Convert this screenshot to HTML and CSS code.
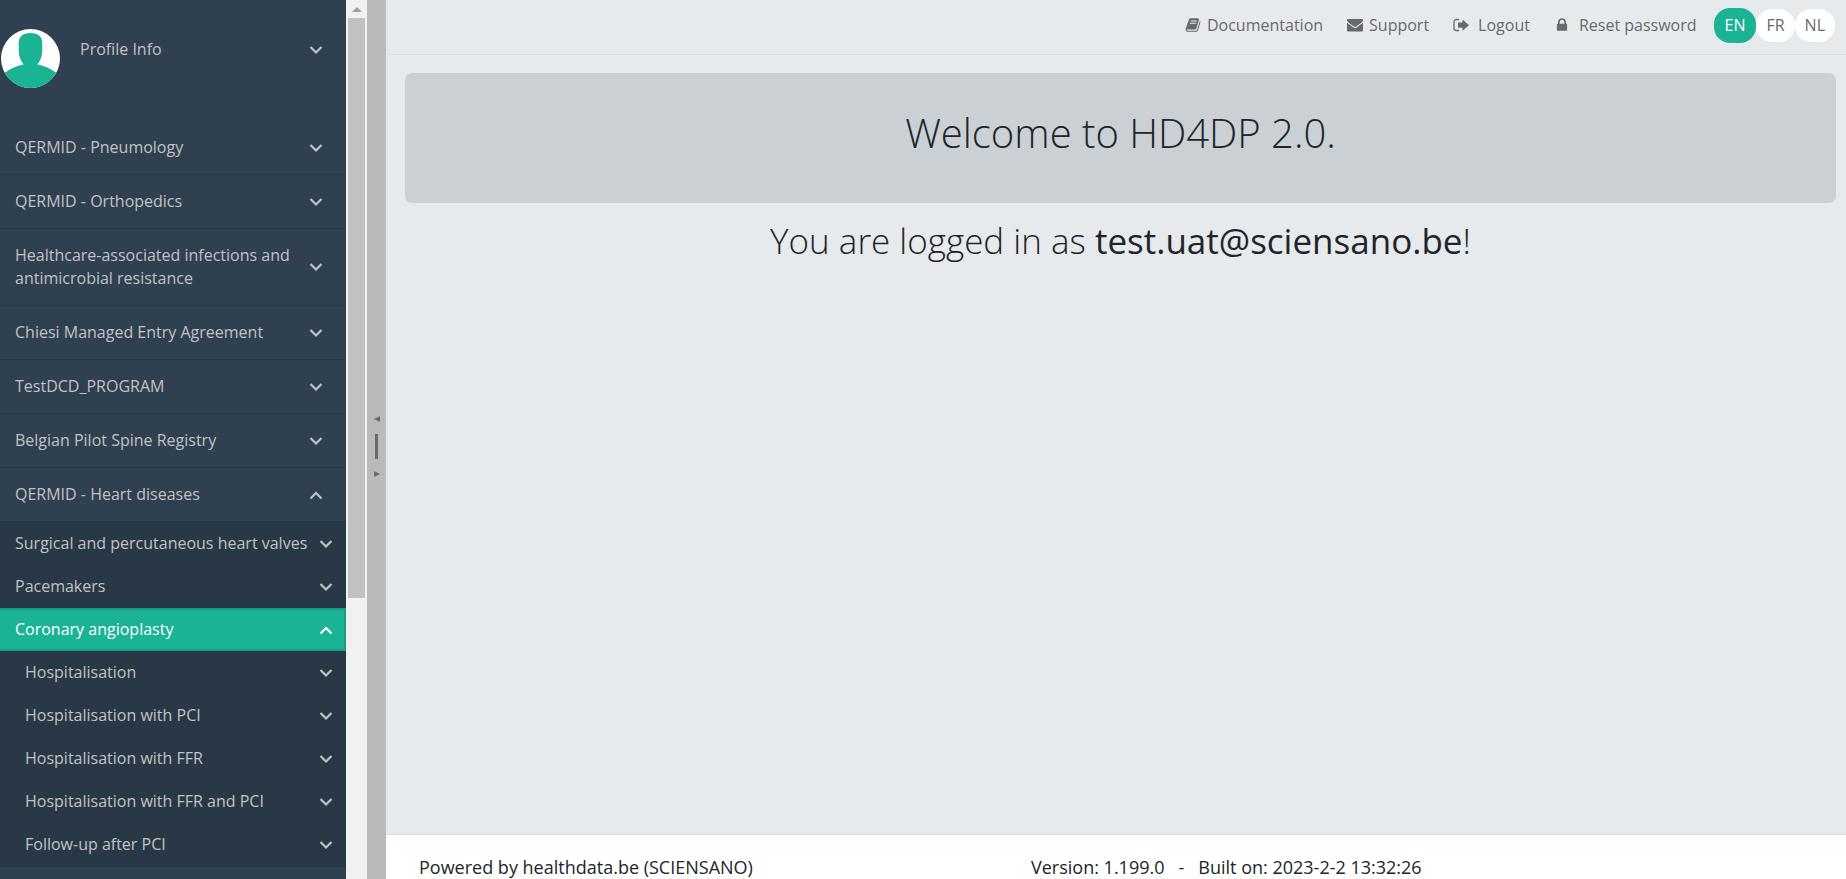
FILE: index.html
```html
<!DOCTYPE html>
<html lang="en">
<head>
  <meta charset="UTF-8" />
  <title>HD4DP 2.0</title>
  <meta name="viewport" content="width=device-width, initial-scale=1.0" />
  <link rel="stylesheet" href="styles.css">
</head>
<body>
  <!-- shared icons -->
  <svg class="sprite" aria-hidden="true">
    <symbol id="down" viewBox="0 0 16 16"><path d="M2.500 5l5.500 5.500L13.500 5" fill="none" stroke="currentColor" stroke-width="2.200" /></symbol>
    <symbol id="up" viewBox="0 0 16 16"><path d="M2.500 11.500L8 6l5.500 5.500" fill="none" stroke="currentColor" stroke-width="2.200" /></symbol>
  </svg>

  <div class="layout">
    <nav class="sidebar">
      <div class="profile">
        <svg class="avatar" viewBox="0 0 60 60">
          <clipPath id="round"><circle cx="30" cy="30" r="30" /></clipPath>
          <g clip-path="url(#round)">
            <rect width="60" height="60" fill="#fff" />
            <path d="M30 4c8 0 12 4 12 10v8c0 6-2 10-5 14q9 1 20 9h5v16H-2V45h5q11-8 20-9c-3-4-5-8-5-14v-8C18 8 22 4 30 4z" fill="#1ab394" />
          </g>
        </svg>
        <button class="profile-btn">Profile Info <svg class="chev"><use href="#down" /></svg></button>
      </div>

      <ul class="menu">
        <li><button>QERMID - Pneumology <svg class="chev"><use href="#down" /></svg></button></li>
        <li><button>QERMID - Orthopedics <svg class="chev"><use href="#down" /></svg></button></li>
        <li><button>Healthcare-associated infections and antimicrobial resistance <svg class="chev"><use href="#down" /></svg></button></li>
        <li><button>Chiesi Managed Entry Agreement <svg class="chev"><use href="#down" /></svg></button></li>
        <li><button>TestDCD_PROGRAM <svg class="chev"><use href="#down" /></svg></button></li>
        <li><button>Belgian Pilot Spine Registry <svg class="chev"><use href="#down" /></svg></button></li>
        <li>
          <button>QERMID - Heart diseases <svg class="chev"><use href="#up" /></svg></button>
          <ul class="submenu">
            <li><button>Surgical and percutaneous heart valves <svg class="chev"><use href="#down" /></svg></button></li>
            <li><button>Pacemakers <svg class="chev"><use href="#down" /></svg></button></li>
            <li>
              <button class="active">Coronary angioplasty <svg class="chev"><use href="#up" /></svg></button>
              <ul class="forms">
                <li><button>Hospitalisation <svg class="chev"><use href="#down" /></svg></button></li>
                <li><button>Hospitalisation with PCI <svg class="chev"><use href="#down" /></svg></button></li>
                <li><button>Hospitalisation with FFR <svg class="chev"><use href="#down" /></svg></button></li>
                <li><button>Hospitalisation with FFR and PCI <svg class="chev"><use href="#down" /></svg></button></li>
                <li><button>Follow-up after PCI <svg class="chev"><use href="#down" /></svg></button></li>
              </ul>
            </li>
          </ul>
        </li>
      </ul>
    </nav>

    <div class="scrollbar">
      <svg class="scroll-arrow" viewBox="0 0 10 6"><path d="M0 6l5-5 5 5z" fill="#a0a0a0" /></svg>
      <div class="scroll-thumb"></div>
    </div>

    <!-- drag handle between sidebar and content -->
    <div class="splitter">
      <svg viewBox="0 0 6 8"><path d="M6 1v6L0 4z" fill="#676a6c" /></svg>
      <span class="grip"></span>
      <svg viewBox="0 0 6 8"><path d="M0 1v6l6-3z" fill="#676a6c" /></svg>
    </div>

    <div class="page">
      <header class="topbar">
        <a href="#"><svg class="icon" viewBox="0 0 1792 1792"><path d="M1703 478q40 57 18 129l-275 906q-19 64-76.500 107.500t-122.500 43.500h-923q-77 0-148.500-53.500t-99.500-131.500q-24-67-2-127 0-4 3-27t4-37q1-8-3-21.500t-3-19.500q2-11 8-21t16.500-23.500 16.500-23.500q23-38 45-91.500t30-91.500q3-10 .5-30t-.5-28q3-11 17-28t17-23q21-36 42-92t25-90q1-9-2.500-32t.5-28q4-13 22-30.500t22-22.500q19-26 42.500-84.500t27.500-96.500q1-8-3-25.500t-2-26.500q2-8 9-18t18-23 17-21q8-12 16.500-30.500t15-35 16-36 19.500-32 26.500-23.500 36-11.500 47.500 5.500l-1 3q38-9 51-9h761q74 0 114 56t18 130l-274 906q-36 119-71.500 153.500t-128.500 34.500h-869q-27 0-38 15-11 16-1 43 24 70 144 70h923q29 0 56-15.500t35-41.500l300-987q7-22 5-57 38 15 59 43zm-1064 2q-4 13 2 22.500t20 9.500h608q13 0 25.500-9.500t16.500-22.500l21-64q4-13-2-22.500t-20-9.500h-608q-13 0-25.500 9.500t-16.500 22.500zm-83 256q-4 13 2 22.500t20 9.500h608q13 0 25.500-9.500t16.500-22.500l21-64q4-13-2-22.500t-20-9.500h-608q-13 0-25.500 9.500t-16.500 22.500z" /></svg>Documentation</a>
        <a href="#"><svg class="icon" viewBox="0 0 16 16"><path d="M1 2h14q1 0 1 1v.5Q15.500 5 14 6L9 9.500q-1 .6-2 0L2 6Q.5 5 0 3.500V3q0-1 1-1zM0 5.800L6.500 10.500q1.500 1 3 0L16 5.800V13.500q0 1-1 1H1q-1 0-1-1z" /></svg>Support</a>
        <a href="#"><svg class="icon wide" viewBox="0 0 16 16"><path d="M6 2.500H3.500Q1 2.500 1 5v6.500q0 2 2.500 2H6" fill="none" stroke="currentColor" stroke-width="1.300" /><path d="M5 5.500h4.500V2.500L16 8.200l-6.500 5.600v-3H5z" /></svg>Logout</a>
        <a href="#"><svg class="icon wide" viewBox="0 0 1792 1792"><path d="M640 768h512v-192q0-106-75-181t-181-75-181 75-75 181v192zm832 96v576q0 40-28 68t-68 28h-960q-40 0-68-28t-28-68v-576q0-40 28-68t68-28h32v-192q0-184 132-316t316-132 316 132 132 316v192h32q40 0 68 28t28 68z" /></svg>Reset password</a>
        <div class="langs">
          <button class="active">EN</button>
          <button>FR</button>
          <button>NL</button>
        </div>
      </header>

      <main>
        <div class="jumbotron">
          <h1>Welcome to HD4DP 2.0.</h1>
        </div>
        <h2>You are logged in as <strong>test.uat@sciensano.be</strong>!</h2>
      </main>

      <footer>
        <div>Powered by healthdata.be (SCIENSANO)</div>
        <div class="build"><span>Version: 1.199.0</span><span>-</span><span>Built on: 2023-2-2 13:32:26</span></div>
      </footer>
    </div>
  </div>
</body>
</html>
```
FILE: styles.css
```css
* { box-sizing:border-box; }
body { margin:0; font-family:"Open Sans",sans-serif; font-size:16px; line-height:23px; color:#212529; background:#e6eaed; }
ul { list-style:none; margin:0; padding:0; }
button { font:inherit; color:inherit; border:none; background:none; cursor:pointer; }
.sprite { display:none; }

.layout { display:flex; height:100vh; overflow:hidden; }

/* sidebar */
.sidebar { flex:0 0 346px; overflow:hidden; background:#2f4050; color:#c2c2c2; }
.profile { display:flex; align-items:flex-start; padding:29px 0 33px; }
.avatar { width:59px; height:59px; margin-left:1px; }
.profile-btn { flex:1; display:flex; justify-content:space-between; align-items:center; padding:9px 22px 8px 20px; }
.chev { flex:none; width:16px; height:16px; }

.menu button { display:flex; justify-content:space-between; align-items:center; width:100%; padding:15px 22px 15px 15px; text-align:left; }
.menu > li { border-bottom:1px solid #283846; }

/* nested levels */
.submenu { padding-top:1px; background:#293846; }
.menu .submenu button { padding:10px 12px 10px 15px; }
.menu .forms button { padding-left:25px; }
.menu .submenu button.active { background:#1ab394; color:#fff; box-shadow:inset -2px 0 0 #179d82, inset 0 2px 0 #179d82, inset 0 -2px 0 #179d82; }

.scrollbar { flex:0 0 21px; display:flex; flex-direction:column; align-items:center; background:#f1f1f1; }
.scroll-arrow { width:10px; height:6px; margin:6px 0; }
.scroll-thumb { width:17px; height:66%; background:#c1c1c1; }

.splitter { flex:0 0 19px; display:flex; flex-direction:column; align-items:center; justify-content:center; gap:11px; padding-top:14px; background:#bababa; }
.splitter svg { width:6px; height:8px; }
.grip { width:3px; height:25px; background:#676a6c; }

/* content */
.page { flex:1; display:flex; flex-direction:column; }
.topbar { display:flex; justify-content:flex-end; align-items:center; gap:24px; height:55px; padding:0 11px 4px 0; border-bottom:1px solid #dce0e3; color:#676a6c; }
.topbar a { display:flex; align-items:center; color:inherit; text-decoration:none; }
.icon { width:16px; height:16px; margin-right:6px; fill:currentColor; }
.icon.wide { margin-right:9px; }
.langs { display:flex; align-items:center; margin-left:-7px; }
.langs button { padding:5px 10px; border-radius:16px; background:#fff; }
.langs .active { padding:6px 11px; background:#1ab394; color:#fff; }

main { flex:1; padding:18px 10px 0 19px; text-align:center; }
.jumbotron { padding:36px 16px 46px; background:#cbd0d4; border-radius:7px; }
h1 { margin:0; font-size:40px; line-height:48px; font-weight:300; }
h2 { margin:15px 0 0; font-size:35px; line-height:46px; font-weight:300; }
h2 strong { font-weight:400; }

footer { display:grid; grid-template-columns:612px 1fr; height:45px; padding:21px 33px 0; background:#fff; border-top:1px solid #d8dee2; font-size:18px; white-space:nowrap; }
.build { display:flex; gap:14px; }
```
